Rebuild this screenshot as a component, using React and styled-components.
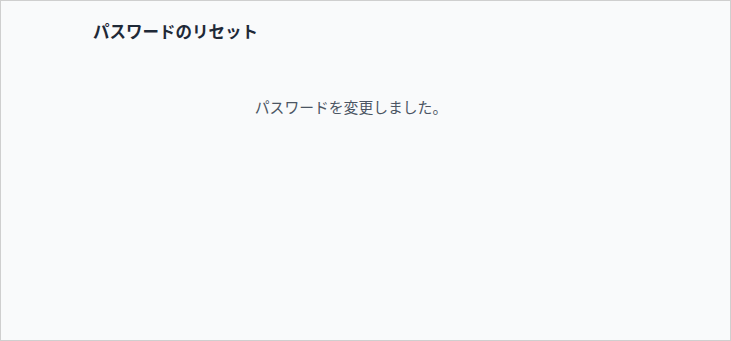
import React from 'react';
import styled, {createGlobalStyle} from "styled-components";

const GlobalStyle = createGlobalStyle`
  html, body {
    margin: 0;
    padding: 0;
    background: #ffffff;
  }
  body {
    font-family: "Noto Sans CJK JP", "Noto Sans", sans-serif;
  }
`
const Page = styled.div`
  box-sizing: border-box;
  width: 731px;
  height: 341px;
  border: 1px solid #cfcfcf;
  background-color: #f9fafb;
`
const Content = styled.div`
  width: 512px;
  margin-left: 92px;
  padding-top: 17px;
`
const Title = styled.h1`
  margin: 0;
  font-size: 16.5px;
  line-height: 26px;
  font-weight: 700;
  color: #1f2937;
`
const Message = styled.p`
  margin: 52px 0 0;
  padding-left: 4px;
  text-align: center;
  font-size: 14.8px;
  line-height: 22px;
  color: #4b5563;
`

const App = () => {
    return (
        <>
            <GlobalStyle/>
            <Page>
                <Content>
                    <Title>パスワードのリセット</Title>
                    <Message>パスワードを変更しました。</Message>
                </Content>
            </Page>
        </>
    );
};

export default App;
